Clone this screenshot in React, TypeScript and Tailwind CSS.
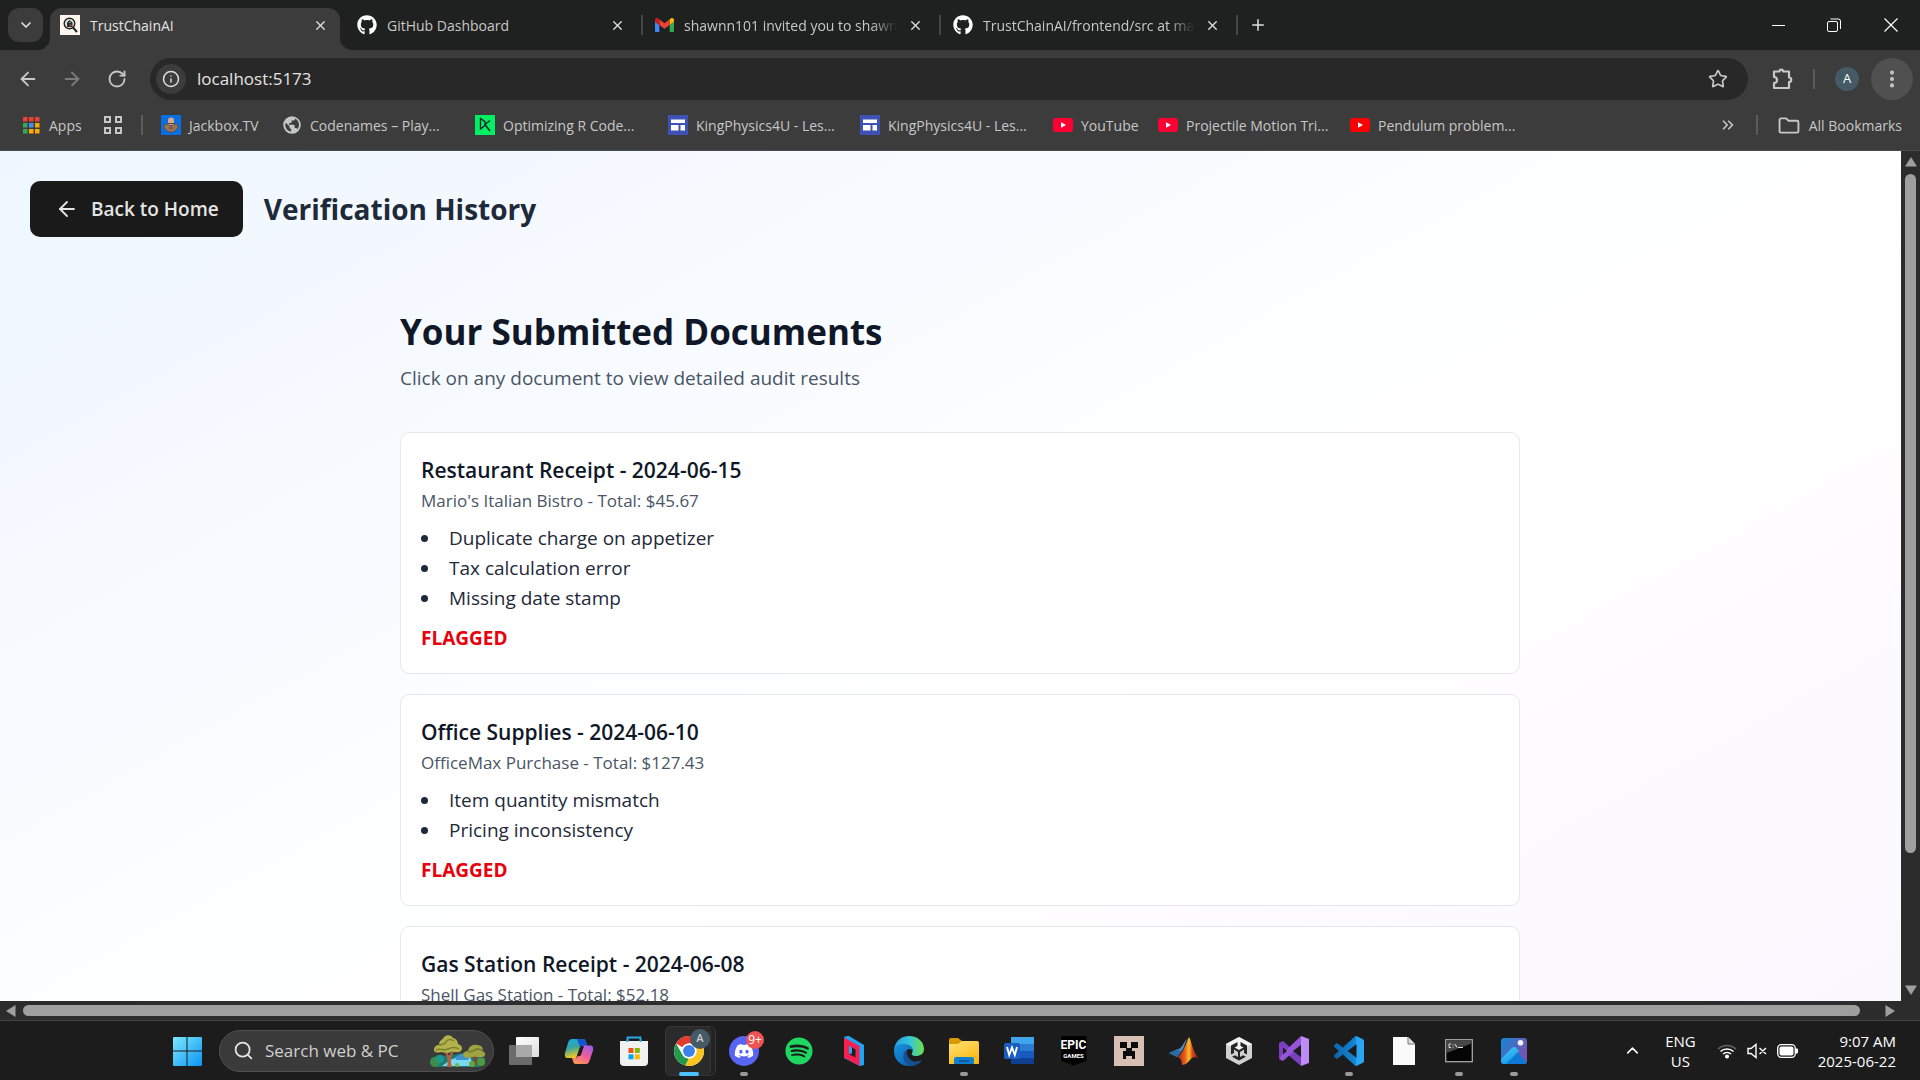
import React from "react";
import { ArrowLeft, ArrowRight, RotateCw, Info, Star, EllipsisVertical, ChevronDown, ChevronUp, ChevronsRight, Plus, X, Search } from "lucide-react";
import { FaGithub, FaDiscord, FaSpotify } from "react-icons/fa";

function Close() {
  return (
    <button aria-label="Close tab" className="flex size-5 shrink-0 items-center justify-center text-[#dedede]">
      <X size={15} strokeWidth={2.2} />
    </button>
  );
}

function GmailIcon() {
  return (
    <svg viewBox="52 42 88 66" className="w-[19px]">
      <path fill="#4285f4" d="M58 108h14V74L52 59v43c0 3.320 2.690 6 6 6" />
      <path fill="#34a853" d="M120 108h14c3.320 0 6-2.690 6-6V59l-20 15" />
      <path fill="#fbbc04" d="M120 48v26l20-15v-8c0-7.420-8.470-11.650-14.400-7.200" />
      <path fill="#ea4335" d="M72 74V48l24 18 24-18v26L96 92" />
      <path fill="#c5221f" d="M52 51v8l20 15V48l-5.600-4.200c-5.940-4.450-14.400-.22-14.400 7.200" />
    </svg>
  );
}

function TrustIcon() {
  return (
    <svg viewBox="0 0 20 20" className="size-5">
      <rect width="20" height="20" fill="#fdf6ee" />
      <circle cx="9.500" cy="8.500" r="5.300" fill="#dfe3e0" stroke="#222" strokeWidth="1.400" />
      <path d="M13 12.500 L17 17" stroke="#222" strokeWidth="2" />
      <path d="M7 12V7.500L9.500 5l3 2.500V12z" fill="#25312f" />
      <path d="M8.500 7.500l1.500-1 1 1.500z" fill="#9fc7ad" />
      <path d="M9 10.500l1.500-1.500 1.500 1.500-1.500 1z" fill="#c63a35" />
    </svg>
  );
}

function AppsIcon() {
  const c = ["#ea4335", "#ea4335", "#ea4335", "#34a853", "#4c8bf5", "#f9ab00", "#34a853", "#f9ab00", "#f9ab00"];
  return (
    <svg viewBox="0 0 17 17" className="size-[17px]">
      {c.map((f, i) => <rect key={i} x={(i % 3) * 6} y={Math.floor(i / 3) * 6} width="4.500" height="4.500" fill={f} />)}
    </svg>
  );
}

function GridIcon() {
  return (
    <svg viewBox="0 0 18 18" className="size-[18px]" fill="none" stroke="#c7c7c7" strokeWidth="2">
      <path d="M1 1h5v5H1zM12 1h5v5h-5zM1 12h5v5H1zM12 12h5v5h-5z" />
    </svg>
  );
}

function JackboxIcon() {
  return (
    <svg viewBox="0 0 20 20" className="size-5">
      <rect width="20" height="20" fill="#0a6fe0" />
      <path d="M7 5.500a3 3 0 0 1 6 0V10H7z" fill="#dba88c" />
      <path d="M2.500 10.500L6 9l4 2 4-2 3.500 1.500-2 4L12 17H8l-3.500-2.500z" fill="#9a7456" stroke="#5d4638" strokeWidth=".7" />
      <path d="M7 8.500h6M8 13h4" stroke="#59402f" strokeWidth="1.200" />
    </svg>
  );
}

function GlobeIcon() {
  return (
    <svg viewBox="0 0 24 24" className="size-5" fill="#c4c7c5">
      <path d="M12 1.500a10.500 10.500 0 1 0 0 21 10.500 10.500 0 0 0 0-21zM4 12c0-1 .2-1.900.5-2.800L9 13.500v1.200c0 1.200 1 2.100 2 2.100v3.100C7 19.500 4 16.200 4 12zm14.200 5.100c-.3-.8-1-1.400-2-1.400h-1v-3c0-.6-.5-1-1-1H8.500v-2h2c.6 0 1-.5 1-1v-2h2c1.100 0 2-.9 2-2v-.4A8 8 0 0 1 18.200 17.100z" />
    </svg>
  );
}

function DataIcon() {
  return (
    <svg viewBox="0 0 20 20" className="size-5">
      <rect width="20" height="20" fill="#03ef62" />
      <path d="M5.500 3.500V14L10 10.500V6.500zM15 5.500L10 9.500l5 6.500" fill="none" stroke="#05192d" strokeWidth="1.300" />
    </svg>
  );
}

function SitesIcon() {
  return (
    <svg viewBox="0 0 20 20" className="size-5">
      <rect width="20" height="20" fill="#3f51b5" />
      <path d="M3 4.500h14v3.500H3zM3 10h7.500v5.500H3zM12.500 10H17v5.500h-4.500z" fill="#fff" />
    </svg>
  );
}

function YouTubeIcon({ fill }: { fill: string }) {
  return (
    <svg viewBox="0 0 20 14" className="h-[14px] w-5">
      <rect width="20" height="14" rx="3" fill={fill} />
      <path d="M8 4.200v5.600l5-2.800z" fill="#fff" />
    </svg>
  );
}

type Mark = { label: string; icon: React.ReactNode; width: string };
const bookmarks: Mark[] = [
  { label: "Jackbox.TV", icon: <JackboxIcon />, width: "w-[121px]" },
  { label: "Codenames – Play...", icon: <GlobeIcon />, width: "w-[193px]" },
  { label: "Optimizing R Code...", icon: <DataIcon />, width: "w-[193px]" },
  { label: "KingPhysics4U - Les...", icon: <SitesIcon />, width: "w-48" },
  { label: "KingPhysics4U - Les...", icon: <SitesIcon />, width: "w-[193px]" },
  { label: "YouTube", icon: <YouTubeIcon fill="#ff0033" />, width: "w-[105px]" },
  { label: "Projectile Motion Tri...", icon: <YouTubeIcon fill="#ff0033" />, width: "w-48" },
  { label: "Pendulum problem...", icon: <YouTubeIcon fill="#ff0000" />, width: "w-[193px]" },
];

function Tab({ icon, title, fade, width }: { icon: React.ReactNode; title: string; fade?: boolean; width: string }) {
  return (
    <div className={`flex h-[34px] items-center pr-[14px] pl-3 ${width}`}>
      {icon}
      <button className={`ml-[10px] flex-1 overflow-hidden text-left text-[14px] whitespace-nowrap text-[#c7c7c7] ${fade ? "mr-2 [mask-image:linear-gradient(to_right,#000_88%,transparent)]" : ""}`}>{title}</button>
      <Close />
    </div>
  );
}

function TabStrip() {
  return (
    <div className="flex h-[50px] shrink-0 bg-[#1f2120] pt-2">
      <button aria-label="Search tabs" className="mr-[7px] ml-2 flex h-[34px] w-[35px] items-center justify-center rounded-[11px] bg-[#3c3c3c] text-[#dedede]">
        <ChevronDown size={16} strokeWidth={2.6} />
      </button>
      <div className="relative flex h-[42px] w-[290px] items-center rounded-t-xl bg-[#3c3c3c] pr-[10px] pb-2 pl-[10px]">
        <span className="absolute bottom-0 -left-3 size-3 bg-[radial-gradient(circle_at_top_left,transparent_12px,#3c3c3c_12px)]" />
        <span className="absolute -right-3 bottom-0 size-3 bg-[radial-gradient(circle_at_top_right,transparent_12px,#3c3c3c_12px)]" />
        <TrustIcon />
        <button className="ml-[10px] flex-1 text-left text-[14px] text-[#e3e3e3]">TrustChainAI</button>
        <Close />
      </div>
      <div className="ml-[5px] flex">
        <Tab width="w-[296px]" icon={<FaGithub size={20} color="#fff" />} title="GitHub Dashboard" />
        <span className="mt-[7px] h-5 w-[2px] bg-[#454746]" />
        <Tab width="w-[296px]" icon={<GmailIcon />} title="shawnn101 invited you to shawn" fade />
        <span className="mt-[7px] h-5 w-[2px] bg-[#454746]" />
        <Tab width="w-[295px]" icon={<FaGithub size={20} color="#fff" />} title="TrustChainAI/frontend/src at ma" fade />
        <span className="mt-[7px] h-5 w-[2px] bg-[#454746]" />
      </div>
      <button aria-label="New tab" className="ml-[10px] flex h-[34px] w-5 items-center justify-center text-[#dedede]"><Plus size={18} /></button>
      <div className="-mt-2 ml-auto flex h-[50px] text-white">
        <button aria-label="Minimize" className="flex w-14 items-center justify-center"><span className="h-px w-[13px] bg-white" /></button>
        <button aria-label="Restore" className="flex w-14 items-center justify-center">
          <svg viewBox="0 0 14 14" className="size-[14px]" fill="none" stroke="#fff"><rect x=".5" y="3.500" width="10" height="10" rx="1.500" /><path d="M3.500 1h8a2 2 0 0 1 2 2v8" /></svg>
        </button>
        <button aria-label="Close" className="flex w-[58px] items-center justify-center">
          <svg viewBox="0 0 14 14" className="size-[14px]" stroke="#fff" strokeWidth="1.200"><path d="M.5.5l13 13M13.500.5l-13 13" /></svg>
        </button>
      </div>
    </div>
  );
}

function Toolbar() {
  return (
    <div className="flex h-[58px] items-center pl-[17px] text-[#c7c7c7]">
      <button aria-label="Back" className="mr-[22px]"><ArrowLeft size={22} strokeWidth={2} /></button>
      <button aria-label="Forward" className="mr-6 text-[#7c7c7c]"><ArrowRight size={22} strokeWidth={2} /></button>
      <button aria-label="Reload" className="mr-[23px]"><RotateCw size={20} strokeWidth={2.2} /></button>
      <div className="flex h-[42px] flex-1 items-center rounded-full bg-[#282828] pr-5 pl-[6px]">
        <span className="mr-[11px] flex size-[30px] items-center justify-center rounded-full bg-[#3c3c3c]"><Info size={18} strokeWidth={2} color="#dedede" /></span>
        <input aria-label="Address" defaultValue="localhost:5173" className="h-6 flex-1 bg-transparent text-[17px] text-[#e3e3e3] outline-none" />
        <button aria-label="Bookmark this page"><Star size={20} strokeWidth={2} /></button>
      </div>
      <button aria-label="Extensions" className="ml-[23px]">
        <svg viewBox="0 0 22 24" className="h-6 w-[22px]" fill="none" stroke="currentColor" strokeWidth="2.200" strokeLinejoin="round"><path d="M3 4.500h5.500a1.800 1.800 0 0 1 3.600 0H18v6a2 2 0 0 1 0 4.500v6H3v-5a3 3 0 0 0 0-6z" /></svg>
      </button>
      <span className="mx-5 h-5 w-[2px] bg-[#5c5c5c]" />
      <button aria-label="Profile" className="flex size-6 items-center justify-center rounded-full bg-[#455a64] text-[13px] text-white">A</button>
      <button aria-label="Menu" className="mr-[7px] ml-3 flex size-[42px] items-center justify-center rounded-full bg-[#505050]"><EllipsisVertical size={22} strokeWidth={2.5} /></button>
    </div>
  );
}

function Bookmarks() {
  return (
    <nav className="flex h-[43px] items-start border-b border-[#4a4a4a] text-[14px] whitespace-nowrap text-[#c7c7c7]">
      <a href="#apps" className="ml-[23px] flex h-[34px] w-[81px] items-center gap-[9px]"><AppsIcon />Apps</a>
      <button aria-label="Tab groups" className="flex h-[34px] items-center"><GridIcon /></button>
      <span className="mt-[7px] mr-[18px] ml-[19px] h-5 w-[2px] bg-[#5c5c5c]" />
      {bookmarks.map((b, i) => (
        <a key={i} href="#bookmark" className={`flex h-[34px] shrink-0 items-center gap-2 ${b.width}`}>{b.icon}{b.label}</a>
      ))}
      <button aria-label="More bookmarks" className="ml-auto flex h-[34px] items-center"><ChevronsRight size={18} strokeWidth={2.2} /></button>
      <span className="mt-[7px] ml-[19px] h-5 w-[2px] bg-[#5c5c5c]" />
      <button className="mr-[18px] ml-5 flex h-[34px] items-center gap-[9px]">
        <svg viewBox="0 0 22 18" className="h-[17px] w-[22px]" fill="none" stroke="currentColor" strokeWidth="2" strokeLinejoin="round"><path d="M1 15V3a1.500 1.500 0 0 1 1.500-1.500H8l2.500 2.500h9A1.500 1.500 0 0 1 21 5.500V15a1.500 1.500 0 0 1-1.500 1.500h-17A1.500 1.500 0 0 1 1 15z" /></svg>
        All Bookmarks
      </button>
    </nav>
  );
}

const documents = [
  { title: "Restaurant Receipt - 2024-06-15", sub: "Mario's Italian Bistro - Total: $45.67", issues: ["Duplicate charge on appetizer", "Tax calculation error", "Missing date stamp"] },
  { title: "Office Supplies - 2024-06-10", sub: "OfficeMax Purchase - Total: $127.43", issues: ["Item quantity mismatch", "Pricing inconsistency"] },
  { title: "Gas Station Receipt - 2024-06-08", sub: "Shell Gas Station - Total: $52.18", issues: [] },
];

// The document is as wide as the window, so the vertical scrollbar hides its last 19 pixels.
function Page() {
  return (
    <main className="min-w-0 flex-1 overflow-hidden">
      <div className="min-h-[1060px] w-[calc(100%+19px)] bg-linear-to-br from-[#eff6ff] via-white to-[#faf5ff]">
        <header className="flex items-center gap-[21px] p-[30px]">
          <button className="flex h-14 items-center gap-3 rounded-[10px] bg-[#1a1a1a] pr-6 pl-[25px] text-[19px] font-semibold text-[#e4e4e4]">
            <ArrowLeft size={24} strokeWidth={1.8} />Back to Home
          </button>
          <h1 className="text-[28px] font-bold text-[#1e2939]">Verification History</h1>
        </header>
        <section className="mx-auto max-w-[1120px] pt-10">
          <h2 className="text-[35px] leading-[50px] font-bold text-[#101828]">Your Submitted Documents</h2>
          <p className="mt-[6px] mb-[39px] text-[19px] leading-[30px] text-[#4a5565]">Click on any document to view detailed audit results</p>
          <div className="flex flex-col gap-5">
            {documents.map((d) => (
              <article key={d.title} className="rounded-[10px] border border-[#e5e7eb] bg-white p-5">
                <h3 className="text-[21px] leading-[35px] font-semibold text-[#101828]">{d.title}</h3>
                <p className="text-[17px] leading-[25px] text-[#4a5565]">{d.sub}</p>
                <ul className="mt-[10px] text-[19px] leading-[30px] text-[#1e2939]">
                  {d.issues.map((t) => (
                    <li key={t} className="flex items-center gap-[21px]"><span className="size-[7px] rounded-full bg-[#1e2939]" />{t}</li>
                  ))}
                </ul>
                {d.issues.length > 0 && <p className="mt-[10px] text-[19px] leading-[30px] font-bold text-[#e7000b]">FLAGGED</p>}
              </article>
            ))}
          </div>
        </section>
      </div>
    </main>
  );
}

function VScroll() {
  return (
    <div className="flex w-[19px] shrink-0 flex-col items-center bg-[#2c2c2c] py-[6px]">
      <svg viewBox="0 0 12 10" className="h-[10px] w-3" fill="#9f9f9f"><path d="M6 0l6 9.500H0z" /></svg>
      <span className="mt-[7px] h-[679px] w-[11px] rounded-full bg-[#9f9f9f]" />
      <svg viewBox="0 0 12 10" className="mt-auto h-[10px] w-3" fill="#9f9f9f"><path d="M6 10L0 .5h12z" /></svg>
    </div>
  );
}

function HScroll() {
  return (
    <div className="flex h-[19px] shrink-0 items-center bg-[#2c2c2c] pr-[25px] pl-[6px]">
      <svg viewBox="0 0 10 12" className="h-3 w-[10px]" fill="#9f9f9f"><path d="M0 6L9.500 0v12z" /></svg>
      <span className="mr-[25px] ml-[7px] h-[11px] flex-1 rounded-full bg-[#9f9f9f]" />
      <svg viewBox="0 0 10 12" className="h-3 w-[10px]" fill="#9f9f9f"><path d="M10 6L.5 0v12z" /></svg>
    </div>
  );
}

function TreeArt() {
  return (
    <svg viewBox="0 0 56 32" className="h-8 w-14">
      <path d="M1 23l7-3 10 1 14-3 13 3 10 2v6l-6 3H3z" fill="#1b7b74" />
      <path d="M20 25l8-3h12l4 9H12z" fill="#7cd8f0" />
      <path d="M25 22l6-3 9 3-2 3H26z" fill="#3e93cf" />
      <circle cx="5" cy="27" r="5" fill="#3c8c4a" /><circle cx="10" cy="24" r="4" fill="#1f9a8a" />
      <path d="M17 32c1-6 1-9-2-14l2-1 2 4 3-5 2 1c-3 5-4 8-2 15z" fill="#b5623c" />
      <path d="M43 30c1-6 0-8-1-11l3 3 3-3 1 1c-3 3-3 6-2 10z" fill="#8d4429" />
      <path d="M4 15c0-4 3-5 5-5 0-5 4-5 5-8 3-3 8-2 9 1 4 1 5 4 5 6 4 1 5 5 3 7-4 3-8 0-10 1-4 2-8 0-10 0-3 1-7 1-7-2z" fill="#b3b24a" />
      <path d="M9 10c3-1 6 0 7-3s5-3 8-1M6 15c4-2 8 1 12-1s8-2 11 0" stroke="#77802f" strokeWidth="1.500" fill="none" />
      <path d="M33 20c0-3 3-4 5-4 1-5 5-7 9-6 5 0 7 4 5 6 4 1 4 5 1 6-4 1-7-1-10 0-3 1-9 2-10-2z" fill="#9fa440" />
      <path d="M38 17c3-1 5 0 7-2s4-1 7 0" stroke="#6d7a2c" strokeWidth="1.500" fill="none" />
      <circle cx="51" cy="27" r="4" fill="#4e9a42" /><circle cx="42" cy="29" r="3" fill="#67a63e" /><circle cx="27" cy="30" r="2" fill="#7fae46" />
    </svg>
  );
}

const vsPath = "M23.15 2.587L18.21.21a1.494 1.494 0 0 0-1.705.29l-9.46 8.630-4.120-3.128a.999.999 0 0 0-1.276.057L.327 7.261A1 1 0 0 0 .326 8.740L3.899 12 .326 15.260a1 1 0 0 0 .001 1.479L1.650 17.940a.999.999 0 0 0 1.276.057l4.120-3.128 9.460 8.630a1.492 1.492 0 0 0 1.704.290l4.942-2.377A1.500 1.500 0 0 0 24 20.060V3.939a1.500 1.500 0 0 0-.850-1.352zm-5.146 14.861L10.826 12l7.178-5.448v10.896z";

const TaskView = () => (
  <svg viewBox="0 0 30 30" className="size-[30px]">
    <defs><linearGradient id="tv" x2="1" y2="1"><stop stopColor="#fff" /><stop offset="1" stopColor="#dcdcdc" /></linearGradient></defs>
    <rect x="7" y="1" width="23" height="20" rx="1" fill="url(#tv)" />
    <rect x="0" y="9" width="23" height="20" rx="1" fill="#6b6b6b" />
    <rect x="7" y="9" width="16" height="12" fill="#a9a9a9" />
  </svg>
);
const Copilot = () => (
  <svg viewBox="0 0 30 30" className="size-[30px]">
    <defs>
      <linearGradient id="cpA" x2=".3" y2="1"><stop stopColor="#16a9e8" /><stop offset=".5" stopColor="#3aa5a0" /><stop offset="1" stopColor="#f5c91c" /></linearGradient>
      <linearGradient id="cpB" x1=".8" x2=".2" y2="1"><stop stopColor="#a35be8" /><stop offset=".5" stopColor="#ee5f9c" /><stop offset="1" stopColor="#ff9b52" /></linearGradient>
    </defs>
    <path d="M8 3h11c2 0 2.500 1 3 3l1 4h-4c-2 0-3 1-3.500 3L13 20c-.6 2-1.500 2-3 2H4c-3 0-3.500-2-3-5l3-10c1-3 2-4 4-4z" fill="url(#cpA)" />
    <path d="M13 3h6c2 0 2.500 1 3 3l1.500 4H19l-3 1z" fill="#1553cf" />
    <path d="M22 28H12c-2 0-2.500-1-3-3l-1-3h3c2 0 3-1 3.500-3l2.500-7c.6-2 1.500-2.500 3-2.500h6c3 0 3.500 2 3 5l-3 9c-1 3-2 4.500-4 4.500z" fill="url(#cpB)" />
    <path d="M13 20l2.500-8 1.500-2h3l-3 9c-.6 1-1.500 1-4 1z" fill="#1c1c1c" />
  </svg>
);
const Store = () => (
  <svg viewBox="0 0 30 30" className="size-[30px]">
    <path d="M8.500 6V1.500h13V6" fill="none" stroke="#29a8e8" strokeWidth="1.800" />
    <path d="M1 5h28v21a4 4 0 0 1-4 4H5a4 4 0 0 1-4-4z" fill="#f1f1f1" />
    <path d="M8.500 6V3M21.500 6V3" stroke="#29a8e8" strokeWidth="1.800" />
    <path d="M9.500 12h5v5h-5z" fill="#f25022" /><path d="M15.800 12h5v5h-5z" fill="#7fba00" /><path d="M9.500 18.300h5v5h-5z" fill="#00a4ef" /><path d="M15.800 18.300h5v5h-5z" fill="#ffb900" />
  </svg>
);
const Chrome = () => (
  <svg viewBox="0 0 48 48" className="size-[30px]">
    <circle cx="24" cy="24" r="24" fill="#fff" />
    <path d="M3.200 12A24 24 0 0 1 44.800 12H24a12 12 0 0 0-10.400 6z" fill="#e33b2e" />
    <path d="M3.200 12L13.600 30A12 12 0 0 0 24 36l-6 11A24 24 0 0 1 3.200 12z" fill="#229a4b" />
    <path d="M44.800 12A24 24 0 0 1 18 47.200L24 36A12 12 0 0 0 34.400 18L31 12z" fill="#fcc31e" />
    <circle cx="24" cy="24" r="12" fill="#fff" /><circle cx="24" cy="24" r="9.500" fill="#3b82ec" />
  </svg>
);
const GamingBrowser = () => (
  <svg viewBox="0 0 20 30" className="h-[30px] w-5">
    <path d="M3 0l2-0 15 9v20l-4 1L0 22V1z" fill="#1da5f2" />
    <path d="M0 1.500L15.500 10v20L0 21.500z" fill="#fa1e4e" />
    <path d="M5 9.500l6.500 4v8L5 18z" fill="#16202b" /><path d="M5 9.500l3 2v6L5 18z" fill="#2da6e8" />
  </svg>
);
const Edge = () => (
  <svg viewBox="0 0 30 30" className="size-[30px]">
    <defs>
      <linearGradient id="edA" x2="1"><stop stopColor="#219bdc" /><stop offset=".5" stopColor="#33c3df" /><stop offset="1" stopColor="#6de246" /></linearGradient>
      <linearGradient id="edB" y2="1"><stop stopColor="#1793de" /><stop offset="1" stopColor="#0a54a8" /></linearGradient>
    </defs>
    <path d="M0 14C1 5 7 0 15 0c9 0 15 6 15 13 0 5-4 7-8 7-3 0-5-1-4-3 2-3 0-7-5-7-5-1-10 0-13 4z" fill="url(#edA)" />
    <path d="M0 15c0-5 5-7 10-7 6 0 9 3 9 7-1-2-4-3-6-1-4 5 1 12 8 12 3 0 5-1 7-2-3 4-8 6-13 6C7 30 0 24 0 15z" fill="url(#edB)" />
    <path d="M12.500 14C8 17 8 24 14 29c5 2 11-1 14-5-7 4-15 1-15.500-10z" fill="#174f91" />
  </svg>
);
const Explorer = () => (
  <svg viewBox="0 0 30 30" className="size-[30px]">
    <defs><linearGradient id="fx" x2=".6" y2="1"><stop stopColor="#ffe27a" /><stop offset="1" stopColor="#fbb912" /></linearGradient></defs>
    <path d="M0 4a2 2 0 0 1 2-2h7l4 3-3 6H0z" fill="#d99a05" />
    <path d="M0 8h9l4-3h15a2 2 0 0 1 2 2v20a1 1 0 0 1-1 1H0z" fill="url(#fx)" />
    <path d="M5 28v-5a2 2 0 0 1 2-2h16a2 2 0 0 1 2 2v5z" fill="#0f7fd0" /><path d="M10 25h10" stroke="#0a4f8c" strokeWidth="1.500" />
  </svg>
);
const Word = () => (
  <svg viewBox="0 0 30 30" className="size-[30px]">
    <path d="M7 1h23v7H7z" fill="#41a5ee" /><path d="M7 8h23v7H7z" fill="#2b7cd3" /><path d="M7 15h23v7H7z" fill="#185abd" /><path d="M7 22h23v6H7z" fill="#103f91" />
    <rect y="7" width="16" height="16" rx="1.500" fill="#1c5bbf" />
    <path d="M3 11l2.200 8L8 11.500 10.800 19 13 11" fill="none" stroke="#fff" strokeWidth="1.900" />
  </svg>
);
const Epic = () => (
  <span className="flex h-[30px] w-[26px] flex-col items-center bg-black pt-[3px] font-['Roboto'] text-white [clip-path:polygon(0_0,100%_0,100%_84%,50%_100%,0_84%)]">
    <span className="text-[12px] leading-[13px] font-bold">EPIC</span>
    <span className="text-[6px] leading-[7px] font-bold">GAMES</span>
  </span>
);
const Creeper = () => (
  <svg viewBox="0 0 30 30" className="size-[30px]"><rect width="30" height="30" fill="#d8bfb4" /><path d="M6 6h7v6H6zM17 6h7v6h-7zM12 12h6v3h3v8h-3v-3h-6v3H9v-8h3z" fill="#0c0b0b" /></svg>
);
const Matlab = () => (
  <svg viewBox="0 0 30 30" className="size-[30px]">
    <defs><linearGradient id="ml" x2="1"><stop stopColor="#8e2416" /><stop offset=".35" stopColor="#e85a1a" /><stop offset=".55" stopColor="#ffc02e" /><stop offset=".7" stopColor="#d1461c" /><stop offset="1" stopColor="#8f1d14" /></linearGradient></defs>
    <path d="M0 17l9-4c4 0 6-8 9-10l-4 10-6 8z" fill="#4a8fc7" /><path d="M0 17l9-4 3 3-4 5z" fill="#2b6ba3" />
    <path d="M8 21c5-2 8-11 12-20 2 2 4 16 10 22-4-3-7-2-9 1-2 2-4 5-8 5 0-4-2-8-5-8z" fill="url(#ml)" />
  </svg>
);
const Unity = () => (
  <svg viewBox="0 0 26 28" className="h-7 w-[26px]">
    <path d="M13 0l13 7v14l-13 7-13-7V7z" fill="#d0d0d0" /><path d="M13 0l13 7-13 7L0 7z" fill="#f2f2f2" />
    <path d="M11.500 5v4l-3 1.500 4.500 2.500 4.500-2.500-3-1.500V5l6.500 3.500v9l-3-1.500v-3.500L14 15v5l3-1.800 3 1.500L13 23.500 6 19.700l3-1.500 3 1.800v-5l-4-2.500V16l-3 1.500v-9z" fill="#242424" />
  </svg>
);
const VisualStudio = () => (
  <svg viewBox="0 0 30 30" className="size-[30px]">
    <path d="M0 7l4-2 18 16v9L4 14.500l0 4L0 22.500z" fill="#7a3fc0" />
    <path d="M0 23l4 2L22 9V0L4 17z" fill="#9455d6" />
    <path d="M22 0l8 3v24l-8 3z" fill="#bd8df5" /><path d="M22 9v12l-8-6z" fill="#1c1c1c" /><path d="M4 11.500L8 15l-4 3.500z" fill="#1c1c1c" />
  </svg>
);
const VsCode = () => (
  <svg viewBox="0 0 24 24" className="size-[30px]">
    <defs><linearGradient id="vc" x2="1"><stop stopColor="#0b66b0" /><stop offset=".74" stopColor="#1687d3" /><stop offset=".75" stopColor="#27a3f3" /><stop offset="1" stopColor="#2aa7f7" /></linearGradient></defs>
    <path d={vsPath} fill="url(#vc)" />
  </svg>
);
const FileIcon = () => (
  <svg viewBox="0 0 22 28" className="h-7 w-[22px]"><path d="M0 0h15l7 7v21H0z" fill="#fafafa" /><path d="M15 0v7h7" fill="#ddd" stroke="#777" strokeWidth="1" /></svg>
);
const Cmd = () => (
  <svg viewBox="0 0 28 24" className="h-6 w-7">
    <rect x=".7" y=".7" width="26.600" height="22" fill="#050505" stroke="#a6a6a6" strokeWidth="1.300" /><path d="M1.500 1.500h25v3L1.500 14z" fill="#474747" />
    <path d="M6 5h-2v3.500h2M8 5.500v.8M8 7.700v.8M10 5l2 3.500M13 8.500h5" stroke="#ddd" fill="none" />
  </svg>
);
const Photos = () => (
  <svg viewBox="0 0 26 26" className="size-[26px]">
    <defs>
      <linearGradient id="phA" x2="1" y2=".6"><stop stopColor="#1287d8" /><stop offset="1" stopColor="#7b52b0" /></linearGradient>
      <linearGradient id="phB" x2=".5" y2="1"><stop stopColor="#4cd2fa" /><stop offset="1" stopColor="#1596ea" /></linearGradient>
      <clipPath id="phC"><rect width="26" height="26" rx="3" /></clipPath>
    </defs>
    <g clipPath="url(#phC)"><rect width="26" height="26" fill="url(#phA)" /><path d="M2 26l11-15 13 13v2z" fill="#0f78d4" /><path d="M0 21l11-11q2-2 4 0l3 3L5 26H0z" fill="url(#phB)" /><circle cx="19.500" cy="4.800" r="2.800" fill="#f4f4f4" /></g>
  </svg>
);

type AppItem = { name: string; icon: React.ReactNode; running?: boolean; active?: boolean; badge?: React.ReactNode };
const apps: AppItem[] = [
  { name: "Task View", icon: <TaskView /> },
  { name: "Copilot", icon: <Copilot /> },
  { name: "Microsoft Store", icon: <Store /> },
  { name: "Chrome", icon: <Chrome />, active: true, badge: <span className="absolute top-[3px] right-[6px] flex size-5 items-center justify-center rounded-full bg-[#455a64] text-[11px] font-semibold text-[#ccc]">A</span> },
  { name: "Discord", icon: <span className="flex size-[30px] items-center justify-center rounded-full bg-[#5865f2]"><FaDiscord size={20} color="#fff" /></span>, running: true, badge: <span className="absolute top-[5px] right-[7px] flex size-[18px] items-center justify-center rounded-full bg-[#ee5253] text-[12px] text-white">9+</span> },
  { name: "Spotify", icon: <FaSpotify size={28} color="#1ed760" /> },
  { name: "Gaming browser", icon: <GamingBrowser /> },
  { name: "Edge", icon: <Edge /> },
  { name: "File Explorer", icon: <Explorer />, running: true },
  { name: "Word", icon: <Word /> },
  { name: "Epic Games", icon: <Epic /> },
  { name: "Minecraft", icon: <Creeper /> },
  { name: "MATLAB", icon: <Matlab /> },
  { name: "Unity Hub", icon: <Unity /> },
  { name: "Visual Studio", icon: <VisualStudio /> },
  { name: "Visual Studio Code", icon: <VsCode />, running: true },
  { name: "Document", icon: <FileIcon /> },
  { name: "Command Prompt", icon: <Cmd />, running: true },
  { name: "Photos", icon: <Photos />, running: true },
];

function Taskbar() {
  return (
    <footer className="flex h-[60px] shrink-0 items-center border-t border-[#434343] bg-[#1c1c1c] text-white">
      <button aria-label="Start" className="ml-[172px]">
        <svg viewBox="0 0 30 30" className="size-[30px]">
          <defs><linearGradient id="win" x2="1" y2="1"><stop stopColor="#7beafc" /><stop offset="1" stopColor="#0c93f5" /></linearGradient></defs>
          <path d="M1 2a1 1 0 0 1 1-1h12.500v13.500H1zM15.500 1H29a1 1 0 0 1 1 1v12.500H15.500zM1 15.500h13.500V30H2a1 1 0 0 1-1-1zM15.500 15.500H30V29a1 1 0 0 1-1 1H15.500z" fill="url(#win)" />
        </svg>
      </button>
      <label className="ml-[17px] flex h-[42px] w-[275px] items-center rounded-full border border-[#505050] bg-[#3a3a3a] pr-[7px] pl-[13px]">
        <Search size={21} strokeWidth={2} color="#e6e6e6" />
        <input aria-label="Search" placeholder="Search web & PC" className="ml-[11px] w-0 flex-1 bg-transparent text-[17px] outline-none placeholder:text-[#d0d0d0]" />
        <TreeArt />
      </label>
      <div className="ml-[2px] flex">
        {apps.map((a) => (
          <button key={a.name} aria-label={a.name} className="relative flex h-[50px] w-[55px] items-center justify-center">
            {a.active && <span className="absolute inset-y-0 right-0 left-1 rounded-md border border-[#363636] bg-[#222]" />}
            {a.active && <span className="absolute inset-y-0 right-[5px] left-1 rounded-md border border-[#363636] bg-[#2b2b2b]" />}
            <span className="relative">{a.icon}</span>
            {a.badge}
            {a.active && <span className="absolute bottom-0 h-1 w-5 rounded-full bg-[#4cc2ff]" />}
            {a.running && <span className="absolute bottom-0 h-1 w-2 rounded-full bg-[#9a9a9a]" />}
          </button>
        ))}
      </div>
      <button aria-label="Show hidden icons" className="mr-[23px] ml-auto"><ChevronUp size={19} strokeWidth={2} /></button>
      <button className="mr-[21px] text-center text-[15px] leading-5">ENG<br />US</button>
      <div className="mr-5 flex items-center gap-[10px]">
        <svg viewBox="0 0 20 16" className="h-4 w-5" fill="none" stroke="#fff" strokeWidth="1.500"><path d="M1 6a13 13 0 0 1 18 0" stroke="#666" /><path d="M3.500 8.500a9.500 9.500 0 0 1 13 0M6 11a6 6 0 0 1 8 0" /><circle cx="10" cy="13.500" r="1.300" fill="#fff" /></svg>
        <svg viewBox="0 0 20 16" className="h-4 w-5" fill="none" stroke="#fff" strokeWidth="1.400"><path d="M1 5.500h3L9 1.500v13l-5-4H1zM12.500 5l6.500 6M19 5l-6.500 6" /></svg>
        <svg viewBox="0 0 21 14" className="h-[14px] w-[21px]"><rect x=".7" y=".7" width="17.600" height="12.600" rx="3.500" fill="none" stroke="#fff" strokeWidth="1.300" /><rect x="2.500" y="2.500" width="14" height="9" rx="2" fill="#fff" /><path d="M19 4.500h1q1 0 1 1v3q0 1-1 1h-1z" fill="#fff" /></svg>
      </div>
      <button className="mr-6 text-right text-[15px] leading-5">9:07 AM<br />2025-06-22</button>
    </footer>
  );
}

export default function App() {
  return (
    <div className="flex h-screen flex-col overflow-hidden font-['Open_Sans','Noto_Sans',sans-serif]">
      <TabStrip />
      <div className="shrink-0 bg-[#3c3c3c]">
        <Toolbar />
        <Bookmarks />
      </div>
      <div className="flex min-h-0 flex-1">
        <Page />
        <VScroll />
      </div>
      <HScroll />
      <Taskbar />
    </div>
  );
}
